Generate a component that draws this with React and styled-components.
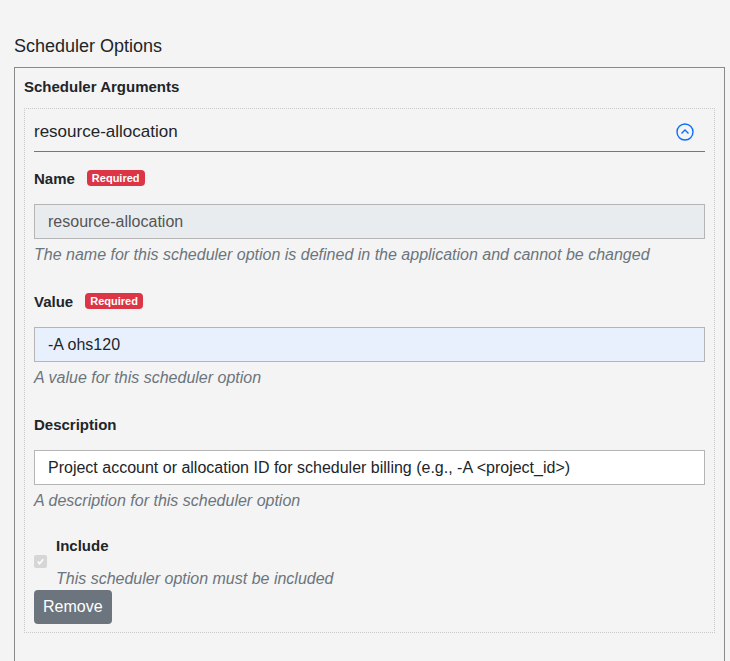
import React from "react";
import styled, { createGlobalStyle } from "styled-components";

const G = createGlobalStyle`
  html,body{margin:0;background:#f4f4f4;font-family:Arial,"Liberation Sans",sans-serif;color:#212529;}
  *{box-sizing:border-box;}
`;
const Page = styled.div`padding:33px 5px 0 14px;height:661px;overflow:hidden;`;
const Title = styled.div`font-size:18px;line-height:26px;color:#212529;margin-bottom:8px;`;
const Outer = styled.div`border:1px solid #8a8a8a;padding:8px 9px 40px 9px;`;
const Legend = styled.div`font-size:15px;font-weight:bold;line-height:22px;margin-bottom:10px;`;
const Inner = styled.div`border:1px dotted #c8c8c8;padding:0 9px 8px 9px;`;
const Head = styled.div`display:flex;align-items:center;justify-content:space-between;height:43px;border-bottom:1px solid #777;padding-top:4px;font-size:17px;`;
const Label = styled.div`display:flex;align-items:center;gap:12px;font-weight:bold;font-size:15px;margin-top:${p=>p.$mt}px;height:22px;`;
const Badge = styled.span`background:#dc3545;color:#fff;font-size:11px;font-weight:bold;border-radius:4px;padding:2px 5px;line-height:12px;`;
const Input = styled.div`margin-top:15px;height:35px;border:1px solid #b5b5b5;background:${p=>p.$bg};color:${p=>p.$c||"#212529"};font-size:16px;display:flex;align-items:center;padding:0 13px;`;
const Help = styled.div`font-style:italic;color:#6c757d;font-size:16px;margin-top:7px;line-height:17px;`;
const CheckRow = styled.div`display:flex;gap:9px;margin-top:33px;`;
const Box = styled.span`width:13px;height:13px;margin-top:13px;border-radius:2px;background:#d6d6d6;display:flex;align-items:center;justify-content:center;flex-shrink:0;`;
const Btn = styled.button`margin-top:3px;background:#6c757d;color:#fff;border:none;border-radius:4px;font-family:inherit;font-size:16px;padding:0 9px;height:34px;`;

export default function App(){
  return <><G/><Page>
    <Title>Scheduler Options</Title>
    <Outer>
      <Legend>Scheduler Arguments</Legend>
      <Inner>
        <Head>resource-allocation
          <svg width="20" height="20" viewBox="0 0 20 20" style={{marginRight:10}}><circle cx="10" cy="10" r="8" fill="none" stroke="#0d6efd" strokeWidth="1.4"/><path d="M6.5 11.5 L10 8 L13.5 11.5" fill="none" stroke="#0d6efd" strokeWidth="1.4"/></svg>
        </Head>
        <Label $mt={15}>Name <Badge>Required</Badge></Label>
        <Input $bg="#e9ecef" $c="#555">resource-allocation</Input>
        <Help>The name for this scheduler option is defined in the application and cannot be changed</Help>
        <Label $mt={27}>Value <Badge>Required</Badge></Label>
        <Input $bg="#e8f0fe">-A ohs120</Input>
        <Help>A value for this scheduler option</Help>
        <Label $mt={27}>Description</Label>
        <Input $bg="#fff">Project account or allocation ID for scheduler billing (e.g., -A &lt;project_id&gt;)</Input>
        <Help>A description for this scheduler option</Help>
        <CheckRow>
          <Box><svg width="9" height="9" viewBox="0 0 10 10"><path d="M2 5 L4 7.5 L8 2.5" fill="none" stroke="#fff" strokeWidth="1.6"/></svg></Box>
          <div><Label $mt={-8}>Include</Label><Help style={{marginTop:14}}>This scheduler option must be included</Help></div>
        </CheckRow>
        <Btn>Remove</Btn>
      </Inner>
    </Outer>
  </Page></>;
}
